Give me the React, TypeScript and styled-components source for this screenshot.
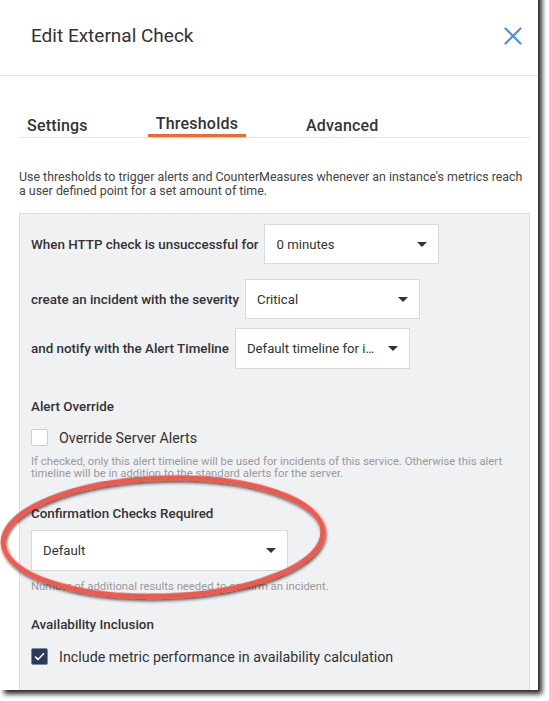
import styled, { createGlobalStyle } from 'styled-components';

const GlobalStyle = createGlobalStyle`
	html, body {
		margin: 0;
		padding: 0;
		background: #ffffff;
	}
	body {
		font-family: Roboto, "Noto Sans", "Liberation Sans", sans-serif;
		color: #333;
	}
`;

const Page = styled.div`
	position: relative;
	width: 549px;
	height: 701px;
	overflow: hidden;
	background: #fff;
`;

const Panel = styled.div`
	margin-top: -12px;
	width: 538px;
	height: 702px;
	background: #fff;
	box-shadow: 4px 4px 5px rgba(0, 0, 0, 0.85);
	display: flex;
	flex-direction: column;
	overflow: hidden;
`;

const Header = styled.div`
	height: 88px;
	box-sizing: border-box;
	padding: 12px 16px 4px 31px;
	border-bottom: 1px solid #e4e4e4;
	display: flex;
	align-items: center;
	justify-content: space-between;
`;

const Title = styled.h1`
	margin: 0;
	font-size: 19px;
	line-height: 24px;
	font-weight: 400;
	color: #333;
`;

const CloseButton = styled.button`
	border: none;
	background: none;
	padding: 0;
	width: 18px;
	height: 18px;
	display: flex;
	cursor: pointer;
`;

const Body = styled.div`
	flex: 1;
	display: flex;
	flex-direction: column;
	padding: 0 8px 0 19px;
`;

const TabList = styled.div`
	margin-top: 39px;
	display: flex;
	align-items: flex-end;
	gap: 52px;
	border-bottom: 1px solid #e2e2e2;
`;

const Tab = styled.div<{ $active?: boolean }>`
	padding: 0 8px ${p => (p.$active ? '2px' : '0')};
	font-size: 16px;
	line-height: 17px;
	font-weight: 500;
	letter-spacing: 0.2px;
	color: #333;
	border-bottom: 3px solid ${p => (p.$active ? '#ee6b28' : 'transparent')};
`;

const Intro = styled.p`
	margin: 32px 0 15px;
	font-size: 12.4px;
	line-height: 14px;
	color: #444;
`;

const Box = styled.div`
	flex: 1;
	background: #f0f1f3;
	border: 1px solid #dcdcdc;
	border-bottom: none;
	padding: 10px 11px;
`;

const Row = styled.div<{ $top?: number }>`
	display: flex;
	align-items: center;
	gap: 6px;
	margin-top: ${p => p.$top ?? 0}px;
`;

const Label = styled.span`
	font-size: 13.4px;
	font-weight: 500;
	color: #333;
	white-space: nowrap;
`;

const SelectBox = styled.div<{ $width: number; $height?: number }>`
	width: ${p => p.$width}px;
	height: ${p => p.$height ?? 40}px;
	box-sizing: border-box;
	background: #fff;
	border: 1px solid #dadada;
	padding: 0 11px;
	display: flex;
	align-items: center;
	gap: 8px;
`;

const SelectText = styled.span`
	flex: 1;
	font-size: 13.2px;
	color: #333;
	white-space: nowrap;
	overflow: hidden;
	text-overflow: ellipsis;
`;

const Caret = styled.span`
	width: 0;
	height: 0;
	border-left: 5px solid transparent;
	border-right: 5px solid transparent;
	border-top: 5px solid #333;
`;

const SectionTitle = styled.div<{ $top: number }>`
	margin-top: ${p => p.$top}px;
	font-size: 13.4px;
	line-height: 16px;
	font-weight: 500;
	color: #333;
`;

const CheckRow = styled.label<{ $top: number }>`
	margin-top: ${p => p.$top}px;
	display: flex;
	align-items: center;
	gap: 11px;
	font-size: 14.3px;
	color: #333;
`;

const CheckBox = styled.span<{ $checked?: boolean }>`
	width: 17px;
	height: 17px;
	box-sizing: border-box;
	border-radius: 2px;
	border: 1px solid ${p => (p.$checked ? '#7d879a' : '#cfcfcf')};
	background: ${p => (p.$checked ? '#2b3a58' : '#fff')};
	display: flex;
	align-items: center;
	justify-content: center;
`;

const Help = styled.div<{ $top: number }>`
	margin-top: ${p => p.$top}px;
	font-size: 11.3px;
	line-height: 12px;
	color: #9a9a9a;
`;

const Annotation = styled.svg`
	position: absolute;
	left: 0;
	top: 0;
	pointer-events: none;
`;

const Select = ({ value, width, height }: { value: string; width: number; height?: number }) => (
	<SelectBox $width={width} $height={height}>
		<SelectText>{value}</SelectText>
		<Caret />
	</SelectBox>
);

const App = () => {
	return (
		<Page>
			<GlobalStyle />
			<Panel>
				<Header>
					<Title>Edit External Check</Title>
					<CloseButton aria-label="Close">
						<svg width="18" height="18" viewBox="0 0 18 18">
							<path d="M1.5 1.5 L16.5 16.5 M16.5 1.5 L1.5 16.5" stroke="#4a8fe2" strokeWidth="2.2" strokeLinecap="round" />
						</svg>
					</CloseButton>
				</Header>
				<Body>
					<TabList>
						<Tab>Settings</Tab>
						<Tab $active>Thresholds</Tab>
						<Tab>Advanced</Tab>
					</TabList>
					<Intro>
						Use thresholds to trigger alerts and CounterMeasures whenever an instance's metrics reach a user defined point for a set amount of time.
					</Intro>
					<Box>
						<Row>
							<Label>When HTTP check is unsuccessful for</Label>
							<Select value="0 minutes" width={175} />
						</Row>
						<Row $top={15}>
							<Label>create an incident with the severity</Label>
							<Select value="Critical" width={175} />
						</Row>
						<Row $top={9}>
							<Label>and notify with the Alert Timeline</Label>
							<Select value="Default timeline for incidents" width={175} height={41} />
						</Row>

						<SectionTitle $top={30}>Alert Override</SectionTitle>
						<CheckRow $top={14}>
							<CheckBox />
							Override Server Alerts
						</CheckRow>
						<Help $top={10}>
							If checked, only this alert timeline will be used for incidents of this service. Otherwise this alert timeline will be in addition to the standard alerts for the server.
						</Help>

						<SectionTitle $top={26}>Confirmation Checks Required</SectionTitle>
						<Row $top={8}>
							<Select value="Default" width={257} height={41} />
						</Row>
						<Help $top={10}>Number of additional results needed to confirm an incident.</Help>

						<SectionTitle $top={24}>Availability Inclusion</SectionTitle>
						<CheckRow $top={15}>
							<CheckBox $checked>
								<svg width="11" height="9" viewBox="0 0 11 9">
									<path d="M1 4.6 L4 7.4 L10 1.2" fill="none" stroke="#fff" strokeWidth="1.5" />
								</svg>
							</CheckBox>
							Include metric performance in availability calculation
						</CheckRow>
					</Box>
				</Body>
			</Panel>
			<Annotation width="549" height="701" viewBox="0 0 549 701">
				<defs>
					<filter id="ringShadow" x="-10%" y="-20%" width="120%" height="140%">
						<feDropShadow dx="1" dy="2.5" stdDeviation="1.4" floodColor="#000" floodOpacity="0.65" />
					</filter>
				</defs>
				<ellipse
					cx="163"
					cy="537"
					rx="160"
					ry="59"
					transform="rotate(-2 163 537)"
					fill="none"
					stroke="#f2594b"
					strokeWidth="5"
					filter="url(#ringShadow)"
				/>
			</Annotation>
		</Page>
	);
};

export default App;
